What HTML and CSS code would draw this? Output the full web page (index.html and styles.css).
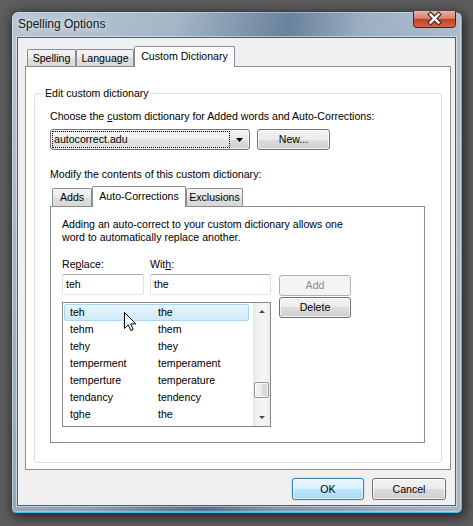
FILE: index.html
```html
<!DOCTYPE html>
<html>
<head>
<meta charset="utf-8">
<title>Spelling Options</title>
<link rel="stylesheet" href="styles.css">
</head>
<body>
<div class="window">
  <div class="titlebar">
    <span class="title">Spelling Options</span>
    <div class="close">
      <svg width="43" height="17" viewBox="0 0 43 17">
        <defs>
          <linearGradient id="cg" x1="0" y1="0" x2="0" y2="1">
            <stop offset="0" stop-color="#eab2a4"/>
            <stop offset="0.45" stop-color="#d97f6b"/>
            <stop offset="0.5" stop-color="#c23f24"/>
            <stop offset="1" stop-color="#d8664a"/>
          </linearGradient>
        </defs>
        <path d="M0.5 0 V13.5 Q0.5 16.5 3.5 16.5 H39.5 Q42.5 16.5 42.5 13.5 V0" fill="url(#cg)" stroke="#4d1f17"/>
        <path d="M17.5 3.5 L25.5 11.5 M25.5 3.5 L17.5 11.5" stroke="#3b2c2a" stroke-width="4.6" stroke-linecap="square"/>
        <path d="M17.5 3.5 L25.5 11.5 M25.5 3.5 L17.5 11.5" stroke="#ffffff" stroke-width="2.4" stroke-linecap="square"/>
      </svg>
    </div>
  </div>
  <div class="client">
    <div class="tabs main-tabs">
      <div class="tab t-spelling">Spelling</div>
      <div class="tab t-language">Language</div>
      <div class="tab active t-custom">Custom Dictionary</div>
    </div>
    <div class="panel main-panel">
      <div class="group">
        <span class="group-title">Edit custom dictionary</span>
        <div class="line">Choose the <u>c</u>ustom dictionary for Added words and Auto-Corrections:</div>
        <div class="combo-row">
          <div class="combo">
            <span class="focus">autocorrect.adu</span>
            <span class="arrow"><svg width="7" height="4" viewBox="0 0 7 4"><path d="M0 0 H7 L3.5 4 Z" fill="#000"/></svg></span>
          </div>
          <div class="btn new">New...</div>
        </div>
        <div class="line modify">Modify the contents of this custom dictionary:</div>
        <div class="tabs inner-tabs">
          <div class="tab t-adds">Adds</div>
          <div class="tab active t-auto">Auto-Corrections</div>
          <div class="tab t-excl">Exclusions</div>
        </div>
        <div class="panel inner-panel">
          <p class="desc">Adding an auto-correct to your custom dictionary allows one<br>word to automatically replace another.</p>
          <div class="ac-grid">
            <div class="lbl">Re<u>p</u>lace:</div>
            <div class="lbl">Wit<u>h</u>:</div>
            <div></div>
            <div class="input">teh</div>
            <div class="input">the</div>
            <div class="btn disabled add">Add</div>
            <div class="list">
              <div class="rows">
                <div class="row hot"><span>teh</span><span>the</span></div>
                <div class="row"><span>tehm</span><span>them</span></div>
                <div class="row"><span>tehy</span><span>they</span></div>
                <div class="row"><span>temperment</span><span>temperament</span></div>
                <div class="row"><span>temperture</span><span>temperature</span></div>
                <div class="row"><span>tendancy</span><span>tendency</span></div>
                <div class="row"><span>tghe</span><span>the</span></div>
              </div>
              <div class="scrollbar">
                <div class="sb-btn"><svg width="6" height="3" viewBox="0 0 6 3"><path d="M0 3 H6 L3 0 Z" fill="#4a4a4a"/></svg></div>
                <div class="sb-track"><div class="sb-thumb"></div></div>
                <div class="sb-btn"><svg width="6" height="3" viewBox="0 0 6 3"><path d="M0 0 H6 L3 3 Z" fill="#4a4a4a"/></svg></div>
              </div>
              <svg class="cursor" width="13" height="20" viewBox="0 0 13 20">
                <path d="M0.5 0.5 V16.5 L4.3 12.8 L6.8 18.6 L9.2 17.6 L6.8 11.9 L11.8 11.9 Z" fill="#fff" stroke="#000" stroke-width="1" stroke-linejoin="miter"/>
              </svg>
            </div>
            <div class="btn delete">Delete</div>
          </div>
        </div>
      </div>
    </div>
    <div class="footer">
      <div class="btn default ok">OK</div>
      <div class="btn cancel">Cancel</div>
    </div>
  </div>
</div>
</body>
</html>
```

FILE: styles.css
```css
html, body {
  margin: 0;
  padding: 0;
}
body {
  width: 473px;
  height: 526px;
  overflow: hidden;
  background: #5e5e5e;
  font-family: "Liberation Sans", Arial, sans-serif;
  font-size: 10.6px;
  line-height: 13px;
  color: #000;
}
u {
  text-decoration: underline;
  text-underline-offset: 1px;
}

.window {
  box-sizing: border-box;
  width: 451px;
  height: 502px;
  margin: 11px 0 0 11px;
  padding: 0 5px 6px;
  border: 1px solid #34455a;
  border-right-color: #46b8e0;
  border-bottom-color: #3cc2ef;
  border-radius: 7px 7px 5px 5px;
  background:
    linear-gradient(100deg, rgba(255,255,255,0.30) 0%, rgba(255,255,255,0.14) 30%, rgba(30,60,95,0.38) 52%, rgba(255,255,255,0.05) 66%, rgba(255,255,255,0.34) 100%),
    linear-gradient(180deg, #98adc0 0%, #8299af 60%, #7a91a8 100%);
  box-shadow: 2px 3px 12px 2px rgba(0,0,0,0.55), inset 0 0 0 1px rgba(255,255,255,0.35);
}

.titlebar {
  display: flex;
  align-items: center;
  height: 25px;
  padding-left: 1px;
}
.title {
  font-size: 12px;
  color: #101820;
  text-shadow: 0 0 6px rgba(255,255,255,0.9), 0 0 12px rgba(255,255,255,0.6);
}
.close {
  margin-left: auto;
  align-self: flex-start;
  margin-top: -1px;
  width: 43px;
  height: 17px;
}
.close svg {
  display: block;
}

.client {
  box-sizing: border-box;
  height: 469px;
  border: 1px solid #4f5f6e;
  box-shadow: 0 0 0 1px rgba(255,255,255,0.45);
  background: #f0f0f0;
  padding: 8px 4px 0 7px;
}

.tabs {
  display: flex;
  align-items: flex-end;
  height: 20px;
  padding-left: 2px;
}
.tab {
  box-sizing: border-box;
  height: 17px;
  border: 1px solid #898c95;
  border-bottom: 0;
  border-radius: 2px 2px 0 0;
  background: linear-gradient(180deg, #f4f4f4 0%, #ececec 45%, #dedede 55%, #d8d8d8 100%);
  display: flex;
  align-items: center;
  justify-content: center;
  white-space: nowrap;
}
.tab.active {
  position: relative;
  z-index: 1;
  height: 21px;
  margin-bottom: -1px;
  background: #fff;
  padding-bottom: 1px;
}
.t-spelling { width: 49px; }
.t-language { width: 58px; }
.t-custom { width: 101px; }

.inner-tabs .tab { height: 18px; }
.inner-tabs .tab.active { height: 21px; }
.t-adds { width: 40px; }
.t-auto { width: 94px; }
.t-excl { width: 57px; }

.panel {
  box-sizing: border-box;
  border: 1px solid #898c95;
  background: #fff;
}
.main-panel {
  height: 404px;
  padding-top: 26px;
}

.group {
  position: relative;
  box-sizing: border-box;
  height: 370px;
  margin: 0 8px;
  border: 1px solid #d5dfe5;
  border-radius: 3px;
  padding: 16px 0 0 15px;
}
.group-title {
  position: absolute;
  top: -7px;
  left: 9px;
  padding: 0 1px;
  background: #fff;
}

.line {
  white-space: nowrap;
}
.combo-row {
  display: flex;
  gap: 7px;
  margin-top: 6px;
}
.combo {
  box-sizing: border-box;
  width: 200px;
  height: 21px;
  border: 1px solid #707070;
  border-radius: 3px;
  background: linear-gradient(180deg, #f2f2f2 0%, #ebebeb 50%, #dddddd 50%, #cfcfcf 100%);
  box-shadow: inset 0 0 0 1px rgba(255,255,255,0.7);
  display: flex;
  align-items: stretch;
  padding: 1px;
}
.focus {
  flex: 1;
  border: 1px dotted #000;
  padding-left: 1px;
  display: flex;
  align-items: center;
  background: linear-gradient(180deg, #f6f6f6 0%, #f0f0f0 50%, #e6e6e6 50%, #dedede 100%);
}
.arrow {
  width: 18px;
  display: flex;
  align-items: center;
  justify-content: center;
}
.arrow svg { display: block; }

.btn {
  box-sizing: border-box;
  height: 21px;
  border: 1px solid #707070;
  border-radius: 3px;
  background: linear-gradient(180deg, #f2f2f2 0%, #ebebeb 50%, #dddddd 50%, #cfcfcf 100%);
  box-shadow: inset 0 0 0 1px rgba(255,255,255,0.75);
  display: flex;
  align-items: center;
  justify-content: center;
}
.btn.new { width: 73px; }
.btn.disabled {
  border-color: #adb2b5;
  background: #f4f4f4;
  box-shadow: none;
  color: #8d8d8d;
}
.btn.default {
  border-color: #3c7fb1;
  background: linear-gradient(180deg, #eaf6fd 0%, #d9f0fc 50%, #bee6fd 50%, #a7d9f5 100%);
  box-shadow: inset 0 0 0 1px rgba(255,255,255,0.6), 0 0 2px rgba(60,170,230,0.6);
}

.modify {
  margin-top: 18px;
}
.inner-tabs {
  margin-top: 5px;
}
.inner-panel {
  width: 375px;
  height: 237px;
  padding: 11px 0 0 11px;
}
.desc {
  margin: 0;
  white-space: nowrap;
}

.ac-grid {
  display: grid;
  grid-template-columns: 82px 121px 74px;
  column-gap: 6px;
  margin-top: 14px;
  align-items: start;
}
.lbl {
  height: 13px;
}
.input {
  box-sizing: border-box;
  height: 21px;
  margin-top: 3px;
  border: 1px solid;
  border-color: #abadb3 #dbdfe6 #e3e9ef #e2e3ea;
  border-radius: 2px;
  background: #fff;
  padding-left: 3px;
  display: flex;
  align-items: center;
}
.add {
  margin: 4px 0 0 2px;
}
.delete {
  margin: 1px 0 0 2px;
}

.list {
  grid-column: 1 / span 2;
  position: relative;
  box-sizing: border-box;
  height: 125px;
  margin-top: 6px;
  border: 1px solid #828790;
  background: #fff;
  display: flex;
}
.rows {
  flex: 1;
  padding-top: 1px;
}
.row {
  box-sizing: border-box;
  height: 17px;
  margin: 0 4px 0 1px;
  border: 1px solid transparent;
  border-radius: 2px;
  padding-left: 5px;
  display: grid;
  grid-template-columns: 88px 1fr;
  align-items: center;
  white-space: nowrap;
}
.row.hot {
  border-color: #a9d8f0;
  background: linear-gradient(180deg, #eaf6fd 0%, #dbf0fb 50%, #cfeaf9 100%);
}

.scrollbar {
  width: 17px;
  display: flex;
  flex-direction: column;
  background: linear-gradient(90deg, #e6e6e6 0%, #f2f2f2 30%, #f5f5f5 70%, #ececec 100%);
}
.sb-btn {
  height: 17px;
  display: flex;
  align-items: center;
  justify-content: center;
}
.sb-btn svg { display: block; }
.sb-track {
  flex: 1;
  padding-top: 62px;
}
.sb-thumb {
  box-sizing: border-box;
  width: 15px;
  height: 16px;
  margin-left: 1px;
  border: 1px solid #9a9a9a;
  border-radius: 2px;
  background: linear-gradient(90deg, #f4f4f4 0%, #eaeaea 50%, #dcdcdc 51%, #d4d4d4 100%);
  box-shadow: inset 0 0 0 1px rgba(255,255,255,0.7);
}
.cursor {
  position: absolute;
  left: 61px;
  top: 9px;
}

.footer {
  display: flex;
  justify-content: flex-end;
  gap: 8px;
  margin: 8px 5px 0 0;
}
.footer .btn {
  height: 22px;
}
.ok { width: 72px; }
.cancel { width: 74px; }
```
